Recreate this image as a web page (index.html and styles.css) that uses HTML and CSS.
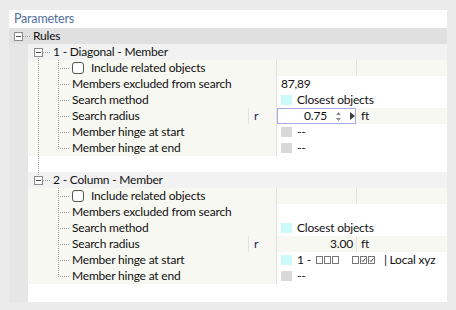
FILE: index.html
```html
<!DOCTYPE html>
<html lang="en">
<head>
    <meta charset="UTF-8">
    <title>Parameters</title>
    <link rel="stylesheet" href="styles.css">
</head>
<body>
    <div class="panel">
        <div class="panel-head">Parameters</div>
        <div class="rules-row">
            <span class="toggle"></span>
            <span class="hline"></span>
            <span class="label">Rules</span>
        </div>
        <div class="tree">
            <div class="strip"></div>
            <div class="rows">
                <!-- rule 1 -->
                <div class="row section first">
                    <span class="toggle"></span>
                    <span class="hline"></span>
                    <span class="label">1 - Diagonal - Member</span>
                </div>
                <div class="row grid cream">
                    <div class="name"><span class="rail"></span><span class="elbow"></span><span class="check"></span><span class="label">Include related objects</span></div>
                    <div class="val"></div>
                    <div class="unit sep"></div>
                </div>
                <div class="row grid">
                    <div class="name"><span class="rail"></span><span class="elbow"></span><span class="label">Members excluded from search</span></div>
                    <div class="val">87,89</div>
                    <div class="unit"></div>
                </div>
                <div class="row grid">
                    <div class="name"><span class="rail"></span><span class="elbow"></span><span class="label">Search method</span></div>
                    <div class="val"><span class="swatch cyan"></span>Closest objects</div>
                    <div class="unit"></div>
                </div>
                <div class="row grid cream">
                    <div class="name"><span class="rail"></span><span class="elbow"></span><span class="label">Search radius</span><span class="sym">r</span></div>
                    <div class="val input">
                        <span class="num">0.75</span>
                        <svg class="spin" width="5" height="9" viewBox="0 0 5 9"><path d="M2.5 0L5 3H0Z M2.5 9L0 6H5Z" fill="#8a8a8a"/></svg>
                        <svg class="more" width="5" height="8" viewBox="0 0 5 8"><path d="M0 0L5 4L0 8Z" fill="#3c3c3c"/></svg>
                    </div>
                    <div class="unit">ft</div>
                </div>
                <div class="row grid">
                    <div class="name"><span class="rail"></span><span class="elbow"></span><span class="label">Member hinge at start</span></div>
                    <div class="val"><span class="swatch grey"></span>--</div>
                    <div class="unit"></div>
                </div>
                <div class="row grid">
                    <div class="name"><span class="rail"></span><span class="elbow last"></span><span class="label">Member hinge at end</span></div>
                    <div class="val"><span class="swatch grey"></span>--</div>
                    <div class="unit"></div>
                </div>
                <div class="row blank"><span class="rail"></span></div>

                <!-- rule 2 -->
                <div class="row section second">
                    <span class="toggle"></span>
                    <span class="hline"></span>
                    <span class="label">2 - Column - Member</span>
                </div>
                <div class="row grid cream">
                    <div class="name"><span class="gap"></span><span class="elbow"></span><span class="check"></span><span class="label">Include related objects</span></div>
                    <div class="val"></div>
                    <div class="unit sep"></div>
                </div>
                <div class="row grid">
                    <div class="name"><span class="gap"></span><span class="elbow"></span><span class="label">Members excluded from search</span></div>
                    <div class="val"></div>
                    <div class="unit"></div>
                </div>
                <div class="row grid">
                    <div class="name"><span class="gap"></span><span class="elbow"></span><span class="label">Search method</span></div>
                    <div class="val"><span class="swatch cyan"></span>Closest objects</div>
                    <div class="unit"></div>
                </div>
                <div class="row grid cream">
                    <div class="name"><span class="gap"></span><span class="elbow"></span><span class="label">Search radius</span><span class="sym">r</span></div>
                    <div class="val right">3.00</div>
                    <div class="unit sep">ft</div>
                </div>
                <div class="row grid">
                    <div class="name"><span class="gap"></span><span class="elbow"></span><span class="label">Member hinge at start</span></div>
                    <div class="val">
                        <span class="swatch cyan"></span>1 -<span class="box first"></span><span class="box"></span><span class="box"></span><span class="box group"></span>
                        <svg class="tick" width="7" height="8" viewBox="0 0 7 8"><rect x="0.5" y="0.5" width="6" height="7" fill="#fff" stroke="#777"/><path d="M1.8 4.2L3.1 5.5L5.4 2.6" fill="none" stroke="#333"/></svg>
                        <svg class="tick" width="7" height="8" viewBox="0 0 7 8"><rect x="0.5" y="0.5" width="6" height="7" fill="#fff" stroke="#777"/><path d="M1.8 4.2L3.1 5.5L5.4 2.6" fill="none" stroke="#333"/></svg>
                        <span class="rest">| Local xyz</span>
                    </div>
                    <div class="unit"></div>
                </div>
                <div class="row grid">
                    <div class="name"><span class="gap"></span><span class="elbow last"></span><span class="label">Member hinge at end</span></div>
                    <div class="val"><span class="swatch grey"></span>--</div>
                    <div class="unit"></div>
                </div>
            </div>
        </div>
    </div>
</body>
</html>
```

FILE: styles.css
```css
body {
    margin: 0;
    background: #ebebeb;
    font-family: Lato, "Noto Sans", sans-serif;
    font-size: 12px;
    letter-spacing: -0.2px;
    color: #111;
}
.panel {
    margin: 10px 0 0 9px;
    width: 438px;
    height: 292px;
    background: #fff;
    display: flex;
    flex-direction: column;
}
.panel-head {
    height: 18px;
    line-height: 18px;
    padding-left: 5px;
    font-size: 12.5px;
    color: #52709e;
}
.rules-row {
    height: 16px;
    background: #e0e0e0;
    display: flex;
    align-items: center;
    padding-left: 5px;
}
.tree {
    flex: 1;
    display: flex;
}
.strip {
    width: 19px;
    background: #e6e6e6;
}
.rows {
    flex: 1;
}
.row {
    height: 16px;
    display: flex;
    align-items: center;
}
.label {
    line-height: 16px;
    white-space: nowrap;
}

/* tree lines */
.toggle {
    width: 7px;
    height: 7px;
    border: 1px solid #8c8c8c;
    background: #fff;
    display: flex;
    align-items: center;
    justify-content: center;
    flex: none;
}
.toggle::before {
    content: "";
    width: 5px;
    height: 1px;
    background: #505050;
}
.hline {
    width: 8px;
    height: 1px;
    margin-right: 2px;
    flex: none;
    background: repeating-linear-gradient(to right, #a0a0a0 0 1px, transparent 1px 2px);
}
.section {
    padding-left: 6px;
    background-color: #f2f2f2;
    background-image: repeating-linear-gradient(to bottom, #a0a0a0 0 1px, transparent 1px 2px);
    background-size: 1px 4px;
    background-repeat: no-repeat;
}
.section.first {
    background-position: 10px 12px;
}
.section.second {
    background-position: 10px 0;
}
.rail,
.gap {
    width: 20px;
    height: 16px;
    margin-left: 10px;
    flex: none;
}
.rail {
    background: repeating-linear-gradient(to bottom, #a0a0a0 0 1px, transparent 1px 2px) 0 0 / 1px 100% no-repeat;
}
.elbow {
    width: 12px;
    height: 16px;
    margin-right: 2px;
    flex: none;
    background:
        repeating-linear-gradient(to bottom, #a0a0a0 0 1px, transparent 1px 2px) 0 0 / 1px 100% no-repeat,
        repeating-linear-gradient(to right, #a0a0a0 0 1px, transparent 1px 2px) 0 8px / 100% 1px no-repeat;
}
.elbow.last {
    background:
        repeating-linear-gradient(to bottom, #a0a0a0 0 1px, transparent 1px 2px) 0 0 / 1px 9px no-repeat,
        repeating-linear-gradient(to right, #a0a0a0 0 1px, transparent 1px 2px) 0 8px / 100% 1px no-repeat;
}
.blank {
    background: #fff;
}

/* property grid */
.grid .name {
    width: 248px;
    height: 16px;
    border-right: 1px solid #e2e2e2;
    background: #f8f8f3;
    display: flex;
    align-items: center;
    flex: none;
}
.grid .name .label {
    flex: 1;
}
.sym {
    width: 28px;
    height: 16px;
    line-height: 16px;
    border-left: 1px solid #e2e2e2;
    padding-left: 5px;
    box-sizing: border-box;
    color: #24246a;
}
.val {
    width: 79px;
    height: 16px;
    line-height: 16px;
    padding-left: 4px;
    box-sizing: border-box;
    display: flex;
    align-items: center;
    white-space: nowrap;
    flex: none;
}
.val.right {
    justify-content: flex-end;
    padding-right: 3px;
}
.unit {
    flex: 1;
    height: 16px;
    line-height: 16px;
    padding-left: 5px;
}
.unit.sep {
    border-left: 1px solid #e2e2e2;
    padding-left: 4px;
}
.cream {
    background: #f8f8f3;
}
.check {
    width: 10px;
    height: 10px;
    border: 1px solid #555;
    border-radius: 3px;
    background: #fff;
    margin-right: 7px;
    flex: none;
}
.swatch {
    width: 11px;
    height: 10px;
    margin-right: 5px;
    flex: none;
}
.swatch.cyan { background: #cdfafd; }
.swatch.grey { background: #d9d9d9; }

.input {
    background: #fff;
    border: 1px solid #a9a8e6;
    padding-left: 0;
}
.input .num {
    width: 49px;
    text-align: right;
}
.spin {
    margin-left: 9px;
}
.more {
    margin-left: 9px;
}
.box {
    width: 5px;
    height: 6px;
    border: 1px solid #777;
    margin-right: 1px;
    flex: none;
}
.box.first {
    margin-left: 5px;
}
.box.group {
    margin-left: 12px;
}
.tick {
    margin-right: 1px;
    flex: none;
}
.rest {
    margin-left: 8px;
}
```
